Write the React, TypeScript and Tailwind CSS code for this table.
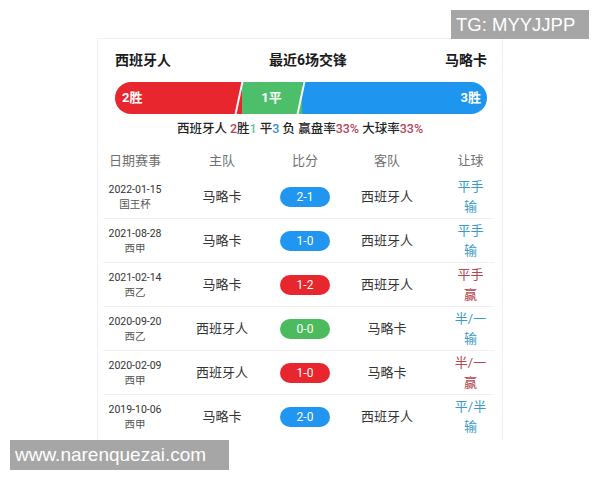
import React from 'react';

const matches = [
  { date: '2022-01-15', comp: '国王杯', home: '马略卡', away: '西班牙人', score: '2-1', color: 'blue', line: '平手', result: '输' },
  { date: '2021-08-28', comp: '西甲', home: '马略卡', away: '西班牙人', score: '1-0', color: 'blue', line: '平手', result: '输' },
  { date: '2021-02-14', comp: '西乙', home: '马略卡', away: '西班牙人', score: '1-2', color: 'red', line: '平手', result: '赢' },
  { date: '2020-09-20', comp: '西乙', home: '西班牙人', away: '马略卡', score: '0-0', color: 'green', line: '半/一', result: '输' },
  { date: '2020-02-09', comp: '西甲', home: '西班牙人', away: '马略卡', score: '1-0', color: 'red', line: '半/一', result: '赢' },
  { date: '2019-10-06', comp: '西甲', home: '马略卡', away: '西班牙人', score: '2-0', color: 'blue', line: '平/半', result: '输' },
];

const pillColors: Record<string, string> = {
  blue: 'bg-[#2196f0]',
  red: 'bg-[#e8262e]',
  green: 'bg-[#4cbb5e]',
};

export default function App() {
  return (
    <div className="relative w-[600px] h-[480px] bg-white overflow-hidden font-['Roboto','Noto_Sans_CJK_SC',sans-serif]">
      <div className="ml-[97px] mt-[38px] w-[406px] h-[402px] border border-[#f0f0f0] border-b-0">
        {/* top summary */}
        <div className="pl-[17px] pr-[15px] pt-[9px]">
          <div className="flex items-center justify-between h-[24px] text-[14px] font-bold text-[#1a1a1a]">
            <span>西班牙人</span>
            <span>最近6场交锋</span>
            <span>马略卡</span>
          </div>
          <div className="relative mt-[10px] h-[32px] rounded-full overflow-hidden flex text-white text-[13px] font-bold">
            <div className="flex-[2] bg-[#e8262e] flex items-center pl-[7px]">2胜</div>
            <div className="flex-[1] bg-[#4dbf6a] flex items-center justify-center">1平</div>
            <div className="flex-[3] bg-[#1e96ef] flex items-center justify-end pr-[6px]">3胜</div>
            <div className="absolute top-0 bottom-0 left-[33.33%] w-[2px] ml-[-1px] bg-white -skew-x-12" />
            <div className="absolute top-0 bottom-0 left-[50%] w-[2px] ml-[-1px] bg-white -skew-x-12" />
          </div>
        </div>
        <div className="mt-[6px] h-[18px] flex items-center justify-center text-[12.5px] font-medium text-[#222] whitespace-pre">
          <span>西班牙人 </span>
          <span className="text-[#b3475c]">2</span>
          <span>胜</span>
          <span className="text-[#6cc48c]">1</span>
          <span> 平</span>
          <span className="text-[#3c92c8]">3</span>
          <span> 负 赢盘率</span>
          <span className="text-[#b3475c]">33%</span>
          <span> 大球率</span>
          <span className="text-[#b3475c]">33%</span>
        </div>

        {/* table */}
        <div className="pl-[5px] pr-[8px] mt-[9px]">
          <div className="grid grid-cols-[64px_110px_56px_108px_1fr] h-[28px] items-center text-center text-[13px] text-[#707070]">
            <span>日期赛事</span>
            <span>主队</span>
            <span>比分</span>
            <span>客队</span>
            <span className="pl-[6px]">让球</span>
          </div>
          {matches.map((m, i) => (
            <div
              key={i}
              className={`grid grid-cols-[64px_110px_56px_108px_1fr] h-[44px] items-center text-center ${i < matches.length - 1 ? 'border-b border-[#efefef]' : ''}`}
            >
              <div className="flex flex-col items-center leading-[15px]">
                <span className="text-[10.5px] text-[#333]">{m.date}</span>
                <span className="text-[10.5px] text-[#555]">{m.comp}</span>
              </div>
              <span className="text-[13px] text-[#333]">{m.home}</span>
              <div className="flex justify-center">
                <span className={`w-[50px] h-[20px] rounded-full flex items-center justify-center text-[12px] text-white ${pillColors[m.color]}`}>
                  {m.score}
                </span>
              </div>
              <span className="text-[13px] text-[#333]">{m.away}</span>
              <div className={`flex flex-col items-center pl-[6px] text-[13px] leading-[20px] ${m.result === '赢' ? 'text-[#b5464f]' : 'text-[#3a9cc6]'}`}>
                <span>{m.line}</span>
                <span>{m.result}</span>
              </div>
            </div>
          ))}
        </div>
      </div>

      {/* watermarks */}
      <div className="absolute left-[451px] top-[10px] w-[138px] h-[29px] bg-[#a6a6a6] text-white text-[18.5px] leading-[29px] pl-[5px] font-['Liberation_Sans',sans-serif]">
        TG: MYYJJPP
      </div>
      <div className="absolute left-[10px] top-[440px] w-[219px] h-[30px] bg-[#a6a6a6] text-white text-[19px] leading-[30px] pl-[5px] font-['Liberation_Sans',sans-serif]">
        www.narenquezai.com
      </div>
    </div>
  );
}
